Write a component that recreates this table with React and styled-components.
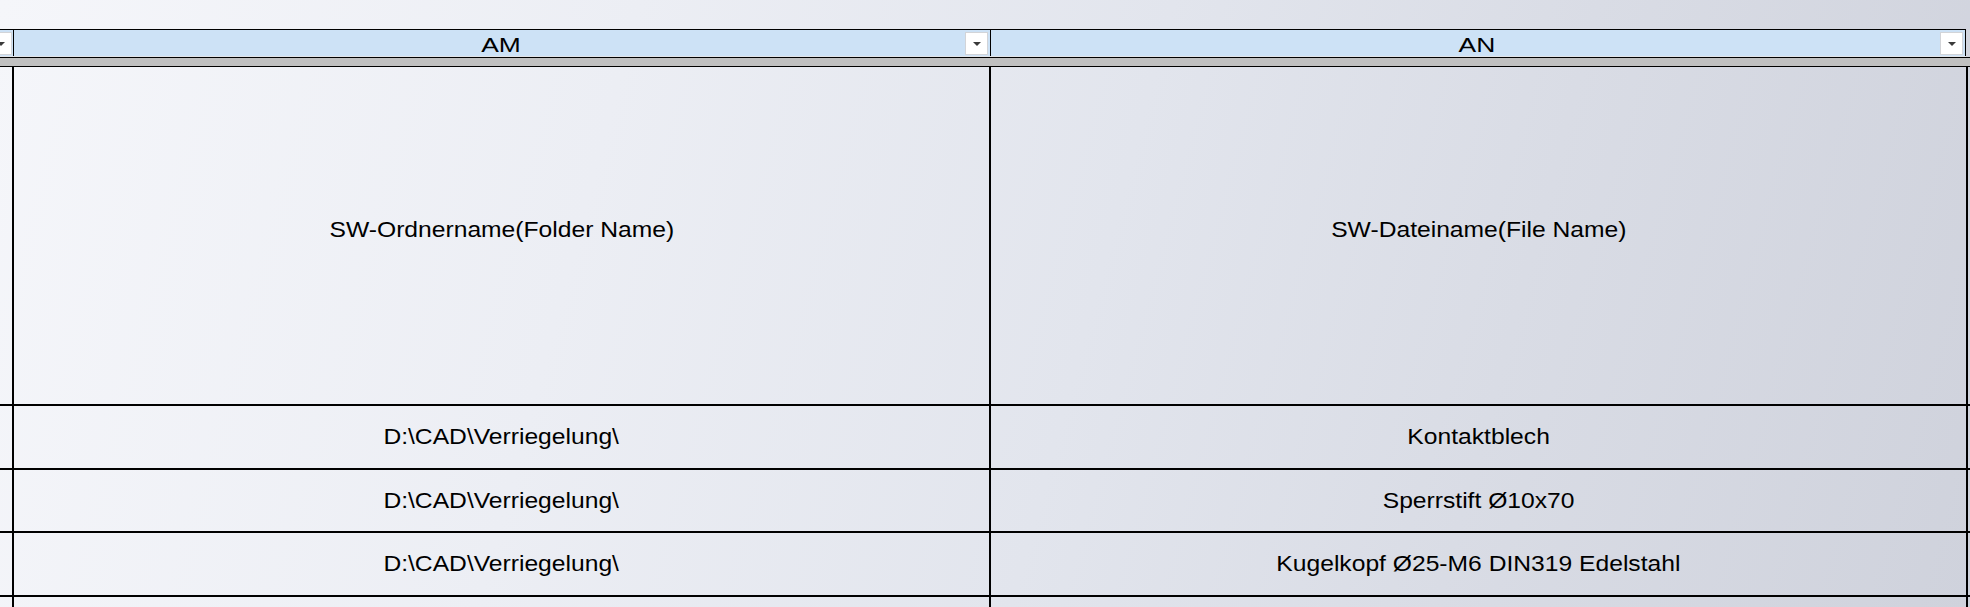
import React from "react";
import styled, { createGlobalStyle } from "styled-components";

const columns = [
  { key: "AL", label: "", narrow: true },
  { key: "AM", label: "AM" },
  { key: "AN", label: "AN" },
];

const rows = [
  { id: "title", tall: true, cells: ["SW-Ordnername(Folder Name)", "SW-Dateiname(File Name)"] },
  { id: "r1", height: 62, cells: ["D:\\CAD\\Verriegelung\\", "Kontaktblech"] },
  { id: "r2", height: 61, cells: ["D:\\CAD\\Verriegelung\\", "Sperrstift Ø10x70"] },
  { id: "r3", height: 62, cells: ["D:\\CAD\\Verriegelung\\", "Kugelkopf Ø25-M6 DIN319 Edelstahl"] },
  { id: "r4", height: 62, cells: ["", ""] },
];

const App = () => {
  return (
    <>
      <GlobalStyle />
      <Sheet>
        <HeaderRow>
          {columns.map((col) => (
            <HeaderCell key={col.key} $narrow={col.narrow}>
              {!col.narrow && <span />}
              {!col.narrow && <ColumnLabel>{col.label}</ColumnLabel>}
              <FilterButton>
                <Caret />
              </FilterButton>
            </HeaderCell>
          ))}
        </HeaderRow>
        <FreezeBar />
        <Body>
          {rows.map((row) => (
            <Row key={row.id} $tall={row.tall} $height={row.height}>
              <Cell $first />
              {row.cells.map((text, i) => (
                <Cell
                  key={i}
                  $tall={row.tall}
                  $last={i === row.cells.length - 1}
                >
                  {text ? <CellText>{text}</CellText> : null}
                </Cell>
              ))}
            </Row>
          ))}
        </Body>
      </Sheet>
    </>
  );
};

const GlobalStyle = createGlobalStyle`
  html, body {
    margin: 0;
    padding: 0;
  }
  body {
    width: 1970px;
    height: 607px;
    overflow: hidden;
    font-family: "Liberation Sans", Arial, sans-serif;
    color: #000;
    background: linear-gradient(105deg, #f5f6fa 0%, #eceef4 30%, #e2e5ed 55%, #d9dce5 75%, #cfd2dc 100%);
  }
`;

const Sheet = styled.div`
  height: 607px;
  overflow: hidden;
  padding-top: 29px;
  box-sizing: border-box;
  display: flex;
  flex-direction: column;
`;

const HeaderRow = styled.div`
  width: 1966px;
  flex-shrink: 0;
  display: grid;
  grid-template-columns: 14px 977px 975px;
  height: 28px;
  box-sizing: border-box;
  border-top: 1px solid #000;
  border-bottom: 1px solid #e2e4e8;
  background: #cde2f6;
`;

const HeaderCell = styled.div`
  box-sizing: border-box;
  border-right: 1px solid #000;
  overflow: hidden;
  padding-right: ${({ $narrow }) => ($narrow ? "1px" : "2px")};
  display: ${({ $narrow }) => ($narrow ? "flex" : "grid")};
  justify-content: flex-end;
  grid-template-columns: 1fr auto 1fr;
  align-items: center;
  & > button {
    justify-self: end;
  }
`;

const ColumnLabel = styled.span`
  display: inline-block;
  font-size: 20px;
  line-height: 1;
  transform: scaleX(1.32);
  padding-top: 3px;
`;

const FilterButton = styled.button`
  flex-shrink: 0;
  width: 23px;
  height: 23px;
  padding: 0;
  margin-top: 1px;
  box-sizing: border-box;
  border: 1px solid #d2d4d8;
  background: #fff;
  display: flex;
  align-items: center;
  justify-content: center;
`;

const Caret = styled.span`
  width: 0;
  height: 0;
  margin-top: 1px;
  border-left: 4px solid transparent;
  border-right: 4px solid transparent;
  border-top: 4px solid #3a3a3a;
`;

const FreezeBar = styled.div`
  flex-shrink: 0;
  height: 8px;
  background: #c0c0c0;
  border-top: 1px solid #000;
  border-bottom: 1px solid #000;
`;

const Body = styled.div`
  display: flex;
  flex-direction: column;
`;

const Row = styled.div`
  display: grid;
  grid-template-columns: 12px 977px 979px;
  height: ${({ $tall, $height }) => ($tall ? 337 : $height)}px;
  flex-shrink: 0;
  border-bottom: 2px solid #000;
`;

const Cell = styled.div`
  box-sizing: border-box;
  border-left: ${({ $first }) => ($first ? "none" : "2px solid #000")};
  border-right: ${({ $last }) => ($last ? "2px solid #000" : "none")};
  padding-bottom: ${({ $tall }) => ($tall ? "12px" : "0")};
  display: flex;
  align-items: center;
  justify-content: center;
`;

const CellText = styled.span`
  display: inline-block;
  font-size: 22px;
  line-height: 1;
  white-space: nowrap;
  transform: scaleX(1.12);
`;

export default App;
